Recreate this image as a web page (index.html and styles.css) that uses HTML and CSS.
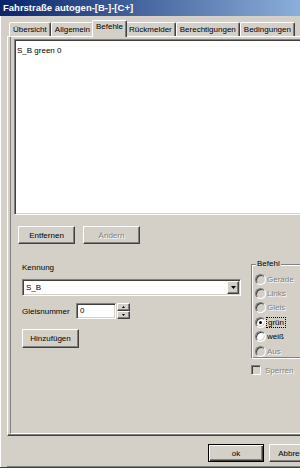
FILE: index.html
```html
<!DOCTYPE html>
<html lang="de">
<head>
  <meta charset="UTF-8">
  <meta name="viewport" content="width=device-width, initial-scale=1.0">
  <title>Fahrstraße autogen</title>
  <link rel="stylesheet" href="styles.css">
</head>
<body>
  <div class="window">
    <!-- Title bar -->
    <div class="titlebar">Fahrstraße autogen-[B-]-[C+]</div>

    <div class="client">
      <!-- Tabs -->
      <div class="tabs">
        <div class="tab">Übersicht</div>
        <div class="tab">Allgemein</div>
        <div class="tab active">Befehle</div>
        <div class="tab">Rückmelder</div>
        <div class="tab">Berechtigungen</div>
        <div class="tab">Bedingungen</div>
      </div>

      <!-- Tab page "Befehle" -->
      <div class="tabpage">
        <div class="panel">
          <div class="listbox">
            <div class="list-item">S_B green 0</div>
          </div>

          <div class="button-row">
            <button class="btn">Entfernen</button>
            <button class="btn" disabled>Ändern</button>
          </div>

          <div class="lower">
            <div class="left-col">
              <div class="caption">Kennung</div>
              <div class="combo">
                <span class="combo-text">S_B</span>
                <span class="combo-arrow">
                  <svg width="5" height="3" viewBox="0 0 5 3"><polygon points="0,0 5,0 2.5,3" fill="#000"/></svg>
                </span>
              </div>
              <div class="track-row">
                <span class="track-label">Gleisnummer</span>
                <div class="spin-edit">0</div>
                <div class="spin-buttons">
                  <span class="spin"><svg width="3" height="2" viewBox="0 0 3 2"><polygon points="1.5,0 3,2 0,2" fill="#000"/></svg></span>
                  <span class="spin"><svg width="3" height="2" viewBox="0 0 3 2"><polygon points="0,0 3,0 1.5,2" fill="#000"/></svg></span>
                </div>
              </div>
              <button class="btn btn-add">Hinzufügen</button>
            </div>

            <div class="right-col">
              <fieldset class="group">
                <legend>Befehl</legend>
                <div class="radio disabled"><span class="radio-circle"></span>Gerade</div>
                <div class="radio disabled"><span class="radio-circle"></span>Links</div>
                <div class="radio disabled"><span class="radio-circle"></span>Gleis</div>
                <div class="radio checked"><span class="radio-circle"></span><span class="focus">grün</span></div>
                <div class="radio"><span class="radio-circle"></span>weiß</div>
                <div class="radio disabled"><span class="radio-circle"></span>Aus</div>
              </fieldset>
              <div class="check disabled"><span class="check-box"></span>Sperren</div>
            </div>
          </div>
        </div>
      </div>

      <!-- Dialog buttons -->
      <div class="footer">
        <button class="btn default">ok</button>
        <button class="btn">Abbrechen</button>
      </div>
    </div>
  </div>
</body>
</html>
```

FILE: styles.css
```css
body {
  margin: 0;
  width: 300px;
  height: 468px;
  overflow: hidden;
  background-color: #d4d0c8;
  font-family: "Liberation Sans", Arial, sans-serif;
  font-size: 8px;
  color: #000;
}
.window {
  width: 360px;
  height: 468px;
  box-sizing: border-box;
  display: flex;
  flex-direction: column;
  border-bottom: 1px solid #404040;
}
.titlebar {
  height: 16px;
  line-height: 16px;
  padding-left: 3px;
  background: linear-gradient(to right, #0a246a, #a6caf0);
  color: #fff;
  font-weight: bold;
  font-size: 9.5px;
  white-space: nowrap;
}
.client {
  flex: 1;
  display: flex;
  flex-direction: column;
  padding: 4px 0 0 7px;
  box-shadow: inset 1px 0 #fff;
}

/* tabs */
.tabs {
  display: flex;
  align-items: flex-end;
  height: 16px;
  padding-left: 2px;
}
.tab {
  height: 14px;
  box-sizing: border-box;
  line-height: 13px;
  padding: 0 3px;
  border: 1px solid #fff;
  border-bottom: none;
  border-right-color: #404040;
  box-shadow: inset -1px 0 #808080;
  border-radius: 2px 2px 0 0;
  white-space: nowrap;
}
.tab.active {
  height: 17px;
  line-height: 12px;
  margin: 0 -2px -1px;
  position: relative;
  z-index: 1;
  background-color: #d4d0c8;
}
.tabpage {
  height: 400px;
  box-sizing: border-box;
  padding: 0 0 1px 2px;
  border-top: 1px solid #fff;
  border-left: 1px solid #fff;
  border-bottom: 1px solid #404040;
  box-shadow: inset 0 -1px #808080;
}
.panel {
  height: 100%;
  box-sizing: border-box;
  display: flex;
  flex-direction: column;
  padding: 2px 4px 0 3px;
  border-left: 1px solid #808080;
  border-bottom: 1px solid #fff;
}

/* sunken white fields */
.listbox,
.combo,
.spin-edit {
  box-sizing: border-box;
  background-color: #fff;
  border: 1px solid;
  border-color: #808080 #fff #fff #808080;
  box-shadow: inset 1px 1px #404040, inset -1px -1px #d4d0c8;
}
.listbox {
  height: 176px;
  padding: 4px 0 0 2px;
}
.list-item {
  line-height: 13px;
}

/* buttons */
.btn {
  width: 57px;
  height: 18px;
  box-sizing: border-box;
  padding: 0;
  background-color: #d4d0c8;
  border: 1px solid;
  border-color: #fff #404040 #404040 #fff;
  box-shadow: inset -1px -1px #808080;
  font-family: "Liberation Sans", Arial, sans-serif;
  font-size: 8px;
  color: #000;
}
.btn:disabled {
  color: #808080;
  text-shadow: 1px 1px #fff;
}
.btn.default {
  width: 56px;
  border-color: #000;
  box-shadow: inset 1px 1px #fff, inset -1px -1px #404040, inset -2px -2px #808080;
}
.button-row {
  display: flex;
  gap: 8px;
  margin: 11px 0 0 4px;
}

/* lower part */
.lower {
  display: flex;
  margin-top: 14px;
}
.left-col {
  width: 219px;
  margin-left: 8px;
  display: flex;
  flex-direction: column;
  align-items: flex-start;
}
.caption {
  margin-top: 4px;
  line-height: 12px;
}
.combo {
  width: 219px;
  height: 17px;
  margin-top: 5px;
  display: flex;
  padding: 1px;
}
.combo-text {
  flex: 1;
  line-height: 13px;
  padding-left: 2px;
}
.combo-arrow,
.spin {
  display: flex;
  align-items: center;
  justify-content: center;
  box-sizing: border-box;
  background-color: #d4d0c8;
  border: 1px solid;
  border-color: #fff #404040 #404040 #fff;
  box-shadow: inset -1px -1px #808080;
}
.combo-arrow {
  width: 12px;
  height: 13px;
}
.combo-arrow svg,
.spin svg {
  display: block;
}
.track-row {
  display: flex;
  height: 16px;
  margin-top: 7px;
  align-items: center;
}
.track-label {
  width: 54px;
}
.spin-edit {
  width: 40px;
  height: 16px;
  line-height: 14px;
  padding-left: 3px;
}
.spin-buttons {
  display: flex;
  flex-direction: column;
  width: 13px;
  height: 16px;
  margin-left: 1px;
}
.spin {
  height: 8px;
}
.btn-add {
  height: 19px;
  margin-top: 10px;
}

/* group box */
.right-col {
  width: 80px;
  margin-left: 10px;
}
.group {
  margin: 0;
  min-width: 0;
  padding: 2px 0 0 3px;
  border: 1px solid;
  border-color: #808080 #fff #fff #808080;
  box-shadow: inset 1px 1px #fff, inset -1px -1px #808080;
}
.group legend {
  margin-left: 1px;
  padding: 0 1px;
  line-height: 12px;
  background-color: #d4d0c8;
}
.radio {
  display: flex;
  align-items: center;
  gap: 1px;
  height: 14.4px;
}
.radio-circle {
  width: 11px;
  height: 11px;
  box-sizing: border-box;
  display: flex;
  align-items: center;
  justify-content: center;
  border-radius: 50%;
  border: 1px solid;
  border-color: #808080 #fff #fff #808080;
  box-shadow: inset 1px 1px #404040, inset -1px -1px #d4d0c8;
  background-color: #fff;
}
.radio.disabled .radio-circle {
  background-color: #d4d0c8;
}
.radio.checked .radio-circle::after {
  content: "";
  width: 3px;
  height: 3px;
  border-radius: 50%;
  background-color: #000;
}
.disabled {
  color: #808080;
  text-shadow: 1px 1px #fff;
}
.focus {
  outline: 1px dotted #000;
  padding: 0 1px;
}
.check {
  display: flex;
  align-items: center;
  gap: 4px;
  margin-top: 6px;
  height: 10px;
}
.check-box {
  width: 10px;
  height: 10px;
  box-sizing: border-box;
  border: 1px solid;
  border-color: #808080 #fff #fff #808080;
  box-shadow: inset 1px 1px #404040, inset -1px -1px #d4d0c8;
  background-color: #d4d0c8;
}

/* footer */
.footer {
  height: 31px;
  box-sizing: border-box;
  display: flex;
  gap: 5px;
  padding: 8px 0 0 201px;
  border-bottom: 1px solid #808080;
}
```
